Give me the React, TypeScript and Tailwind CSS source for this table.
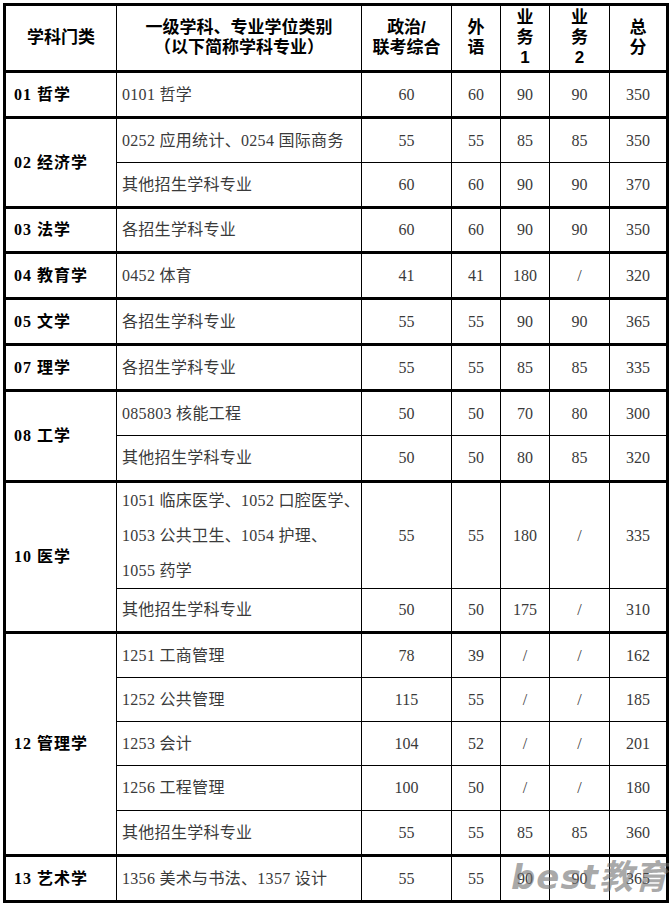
import React from 'react';

type Row = { name: React.ReactNode; vals: string[]; h: string };
type Group = { cat: string; rows: Row[] };

const groups: Group[] = [
  { cat: '01 哲学', rows: [{ name: '0101 哲学', vals: ['60', '60', '90', '90', '350'], h: 'h-[46px]' }] },
  {
    cat: '02 经济学',
    rows: [
      { name: '0252 应用统计、0254 国际商务', vals: ['55', '55', '85', '85', '350'], h: 'h-[45px]' },
      { name: '其他招生学科专业', vals: ['60', '60', '90', '90', '370'], h: 'h-[45px]' },
    ],
  },
  { cat: '03 法学', rows: [{ name: '各招生学科专业', vals: ['60', '60', '90', '90', '350'], h: 'h-[45px]' }] },
  { cat: '04 教育学', rows: [{ name: '0452 体育', vals: ['41', '41', '180', '/', '320'], h: 'h-[46px]' }] },
  { cat: '05 文学', rows: [{ name: '各招生学科专业', vals: ['55', '55', '90', '90', '365'], h: 'h-[46px]' }] },
  { cat: '07 理学', rows: [{ name: '各招生学科专业', vals: ['55', '55', '85', '85', '335'], h: 'h-[46px]' }] },
  {
    cat: '08 工学',
    rows: [
      { name: '085803 核能工程', vals: ['50', '50', '70', '80', '300'], h: 'h-[45px]' },
      { name: '其他招生学科专业', vals: ['50', '50', '80', '85', '320'], h: 'h-[46px]' },
    ],
  },
  {
    cat: '10 医学',
    rows: [
      {
        name: (
          <div className="leading-[35px]">
            <div>1051 临床医学、1052 口腔医学、</div>
            <div>1053 公共卫生、1054 护理、</div>
            <div>1055 药学</div>
          </div>
        ),
        vals: ['55', '55', '180', '/', '335'],
        h: 'h-[105px]',
      },
      { name: '其他招生学科专业', vals: ['50', '50', '175', '/', '310'], h: 'h-[44px]' },
    ],
  },
  {
    cat: '12 管理学',
    rows: [
      { name: '1251 工商管理', vals: ['78', '39', '/', '/', '162'], h: 'h-[45px]' },
      { name: '1252 公共管理', vals: ['115', '55', '/', '/', '185'], h: 'h-[44px]' },
      { name: '1253 会计', vals: ['104', '52', '/', '/', '201'], h: 'h-[44px]' },
      { name: '1256 工程管理', vals: ['100', '50', '/', '/', '180'], h: 'h-[45px]' },
      { name: '其他招生学科专业', vals: ['55', '55', '85', '85', '360'], h: 'h-[45px]' },
    ],
  },
  { cat: '13 艺术学', rows: [{ name: '1356 美术与书法、1357 设计', vals: ['55', '55', '90', '90', '365'], h: 'h-[46px]' }] },
];

const serif = "font-['Liberation_Serif','Noto_Sans_CJK_SC',serif]";
const sans = "font-['Liberation_Sans','Noto_Sans_CJK_SC',sans-serif]";

export default function App() {
  return (
    <div className="relative w-[669px] h-[906px] bg-white pl-[3px] pt-[3px] overflow-hidden">
      <table className="w-[663px] table-fixed border-collapse border-[3px] border-black">
        <colgroup>
          <col className="w-[112px]" />
          <col className="w-[245px]" />
          <col className="w-[90px]" />
          <col className="w-[49px]" />
          <col className="w-[49px]" />
          <col className="w-[60px]" />
          <col className="w-[58px]" />
        </colgroup>
        <thead>
          <tr className={`h-[67px] ${sans} text-[17px] leading-[20px] font-bold text-black`}>
            <th className="border border-black p-0">学科门类</th>
            <th className="border border-black p-0">
              一级学科、专业学位类别
              <br />
              （以下简称学科专业）
            </th>
            <th className="border border-black p-0">
              政治/
              <br />
              联考综合
            </th>
            <th className="border border-black p-0">
              外
              <br />
              语
            </th>
            <th className="border border-black p-0">
              业
              <br />
              务
              <br />1
            </th>
            <th className="border border-black p-0">
              业
              <br />
              务
              <br />2
            </th>
            <th className="border border-black p-0">
              总
              <br />
              分
            </th>
          </tr>
        </thead>
        <tbody className={`${serif} text-[16px] leading-[20px]`}>
          {groups.map((g) =>
            g.rows.map((r, i) => (
              <tr key={g.cat + i} className={r.h}>
                {i === 0 && (
                  <td
                    rowSpan={g.rows.length}
                    className="border border-black border-t-[3px] p-0 pl-[8px] font-bold text-black tracking-[1px] whitespace-nowrap"
                  >
                    {g.cat}
                  </td>
                )}
                <td
                  className={`border border-black p-0 pl-[5px] text-[#3a3a3a] tracking-[0.3px] whitespace-nowrap ${
                    i === 0 ? 'border-t-[3px]' : ''
                  }`}
                >
                  {r.name}
                </td>
                {r.vals.map((v, j) => (
                  <td
                    key={j}
                    className={`border border-black p-0 text-center text-[#3a3a3a] ${i === 0 ? 'border-t-[3px]' : ''}`}
                  >
                    {v}
                  </td>
                ))}
              </tr>
            ))
          )}
        </tbody>
      </table>
      <div className="absolute left-[511px] top-[857px] font-['DejaVu_Sans','Noto_Sans_CJK_SC',sans-serif] italic font-bold text-[34px] leading-[40px] text-[#6f6f6f]/60 tracking-[1px] pointer-events-none">
        best教育
      </div>
    </div>
  );
}
